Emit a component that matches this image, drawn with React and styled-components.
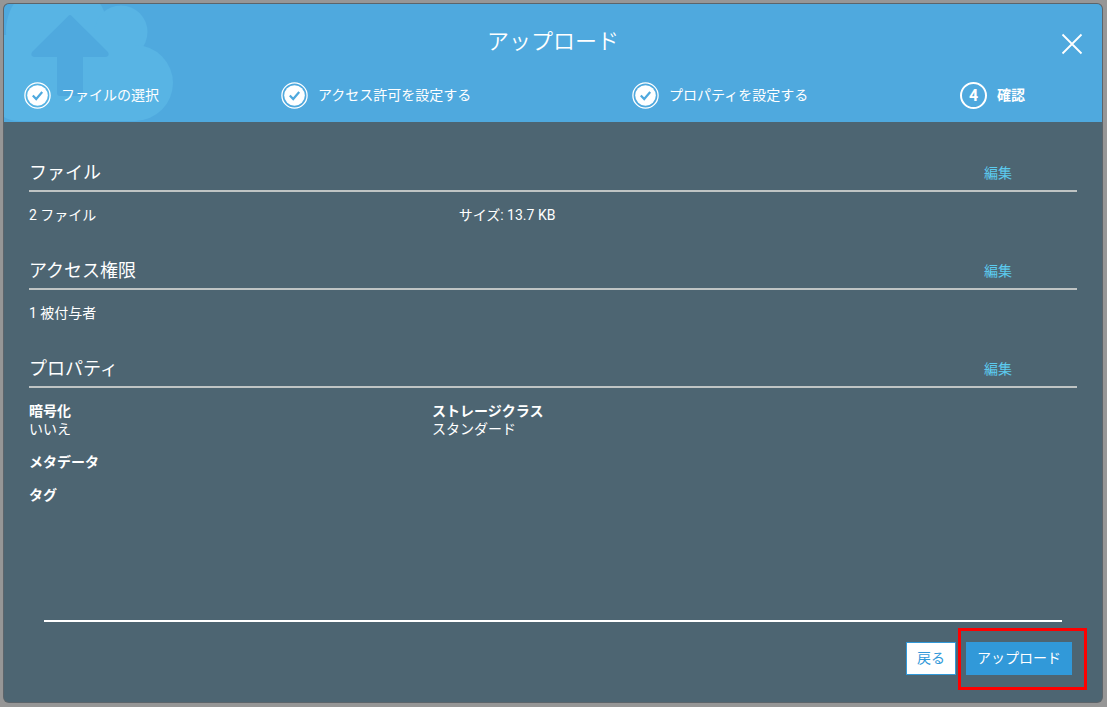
import React from "react";
import styled, { createGlobalStyle } from "styled-components";

const GlobalStyle = createGlobalStyle`
  *, *::before, *::after { box-sizing: border-box; }
  body {
    margin: 0;
    background: #969696;
    color: #fff;
    font-family: Roboto, "Noto Sans CJK JP", sans-serif;
    font-size: 14px;
    line-height: 20px;
  }
`;

const Backdrop = styled.div`
  display: flex;
  min-height: 100vh;
  padding: 4px 5px 5px 4px;
`;

const Dialog = styled.section`
  display: flex;
  flex: 1;
  flex-direction: column;
  min-width: 0;
  overflow: hidden;
  border-radius: 5px;
  background: #4d6572;
  box-shadow: 0 0 0 1px #5c646a;
`;

const Header = styled.header`
  position: relative;
  height: 118px;
  padding: 22px 20px 0;
  background: #4fa9de;
`;

const CloudArt = styled.svg`
  position: absolute;
  left: 0;
  top: 0;
`;

const Title = styled.h1`
  position: relative;
  margin: 0;
  font-size: 22px;
  font-weight: 350;
  line-height: 32px;
  text-align: center;
`;

const CloseButton = styled.button`
  position: absolute;
  top: 28px;
  right: 18px;
  width: 24px;
  height: 24px;
  padding: 0;
  border: 0;
  background: none;
  cursor: pointer;

  svg { display: block; }
`;

const Steps = styled.ol`
  position: relative;
  display: grid;
  grid-template-columns: 257fr 351fr 328fr 122fr;
  margin: 24px 0 0;
  padding: 0;
  list-style: none;
`;

const Step = styled.li`
  display: flex;
  align-items: center;
  gap: 10px;
  font-weight: ${(p) => (p.$current ? 700 : 400)};
  white-space: nowrap;
`;

const StepLabel = styled.span`
  padding-bottom: 2px;
`;

const StepNumber = styled.span`
  width: 27px;
  height: 27px;
  border: 2px solid #fff;
  border-radius: 50%;
  font-size: 16px;
  line-height: 24px;
  text-align: center;
`;

const Body = styled.main`
  flex: 1;
  padding: 35px 25px 0;
`;

const Group = styled.section`
  margin-bottom: 30px;
`;

const GroupHead = styled.div`
  display: flex;
  align-items: center;
  justify-content: space-between;
  padding: 1px 65px 2px 0;
  border-bottom: 2px solid #bfc4c4;
`;

const GroupTitle = styled.h2`
  margin: 0;
  font-size: 18px;
  font-weight: 400;
  line-height: 30px;
`;

const EditLink = styled.a`
  color: #5ccbef;
  text-decoration: none;
`;

const Summary = styled.div`
  display: grid;
  grid-template-columns: 41% 1fr;
  padding-top: 13px;
`;

const Properties = styled.dl`
  display: grid;
  grid-template-columns: 403fr 645fr;
  row-gap: 15px;
  margin: 0;
  padding-top: 14px;
  line-height: 18px;
`;

const Property = styled.div`
  grid-column: ${(p) => (p.$wide ? "1 / -1" : "auto")};

  dt { font-weight: 700; }
  dd { margin: 0; }
`;

const Footer = styled.footer`
  display: flex;
  justify-content: flex-end;
  margin: 0 40px;
  padding: 20px 0 27px;
  border-top: 2px solid #fff;
`;

const Actions = styled.div`
  display: flex;
  gap: 10px;
  margin-right: -10px;
`;

const Button = styled.button`
  height: 33px;
  padding: 0 10px 2px;
  border: 1px solid #3199d9;
  background: ${(p) => (p.$primary ? "#3199d9" : "#fff")};
  color: ${(p) => (p.$primary ? "#fff" : "#3199d9")};
  font: inherit;
  cursor: pointer;
`;

const Highlight = styled.div`
  position: relative;

  &::after {
    content: "";
    position: absolute;
    inset: -14px -15px -15px -8px;
    border: 3px solid #fe0000;
    pointer-events: none;
  }
`;

const DoneIcon = () => (
  <svg width="27" height="27" viewBox="0 0 27 27" aria-hidden="true">
    <circle cx="13.5" cy="13.5" r="12.6" fill="none" stroke="#fff" strokeWidth="1.3" />
    <circle cx="13.5" cy="13.5" r="10.3" fill="#fff" />
    <path d="M8.800 13.500l3.400 3.500 6-7" fill="none" stroke="#4fa9de" strokeWidth="2.2" />
  </svg>
);

const steps = [
  "ファイルの選択",
  "アクセス許可を設定する",
  "プロパティを設定する",
  "確認",
];

function Section({ title, children }) {
  return (
    <Group>
      <GroupHead>
        <GroupTitle>{title}</GroupTitle>
        <EditLink href="#edit" aria-label={`${title} 編集`}>編集</EditLink>
      </GroupHead>
      {children}
    </Group>
  );
}

export default function App() {
  return (
    <>
      <GlobalStyle />
      <Backdrop>
        <Dialog role="dialog" aria-labelledby="dialog-title">
          <Header>
            <CloudArt width="170" height="118" viewBox="4 4 170 118" aria-hidden="true">
              <g fill="#58b4e4">
                <circle cx="57" cy="31" r="51" />
                <circle cx="121" cy="32" r="26.5" />
                <circle cx="135" cy="83" r="38" />
                <path d="M4 35H107V45H135V121H20Q10 121 4 117Z" />
              </g>
              <path
                d="M68 16.200Q70 14 72 16.200L107.500 51.500Q109.500 54 108 56Q107 57 105 57H83V93Q83 96 80 96H60Q57 96 57 93V57H35Q33 57 32 56Q30.500 54 32.500 51.500Z"
                fill="#4fa9de"
              />
            </CloudArt>
            <Title id="dialog-title">アップロード</Title>
            <CloseButton type="button" aria-label="閉じる">
              <svg width="24" height="24" viewBox="0 0 24 24">
                <path d="M2.500 2.500l19 19M21.500 2.500l-19 19" stroke="#fff" strokeWidth="1.8" />
              </svg>
            </CloseButton>
            <Steps>
              {steps.map((label, i) => {
                const current = i === steps.length - 1;
                return (
                  <Step key={label} $current={current} aria-current={current ? "step" : undefined}>
                    {current ? <StepNumber>{i + 1}</StepNumber> : <DoneIcon />}
                    <StepLabel>{label}</StepLabel>
                  </Step>
                );
              })}
            </Steps>
          </Header>

          <Body>
            <Section title="ファイル">
              <Summary>
                <span>2 ファイル</span>
                <span>サイズ: 13.7 KB</span>
              </Summary>
            </Section>
            <Section title="アクセス権限">
              <Summary>
                <span>1 被付与者</span>
              </Summary>
            </Section>
            <Section title="プロパティ">
              <Properties>
                <Property>
                  <dt>暗号化</dt>
                  <dd>いいえ</dd>
                </Property>
                <Property>
                  <dt>ストレージクラス</dt>
                  <dd>スタンダード</dd>
                </Property>
                <Property $wide>
                  <dt>メタデータ</dt>
                </Property>
                <Property $wide>
                  <dt>タグ</dt>
                </Property>
              </Properties>
            </Section>
          </Body>

          <Footer>
            <Actions>
              <Button type="button">戻る</Button>
              <Highlight>
                <Button type="button" $primary>アップロード</Button>
              </Highlight>
            </Actions>
          </Footer>
        </Dialog>
      </Backdrop>
    </>
  );
}
